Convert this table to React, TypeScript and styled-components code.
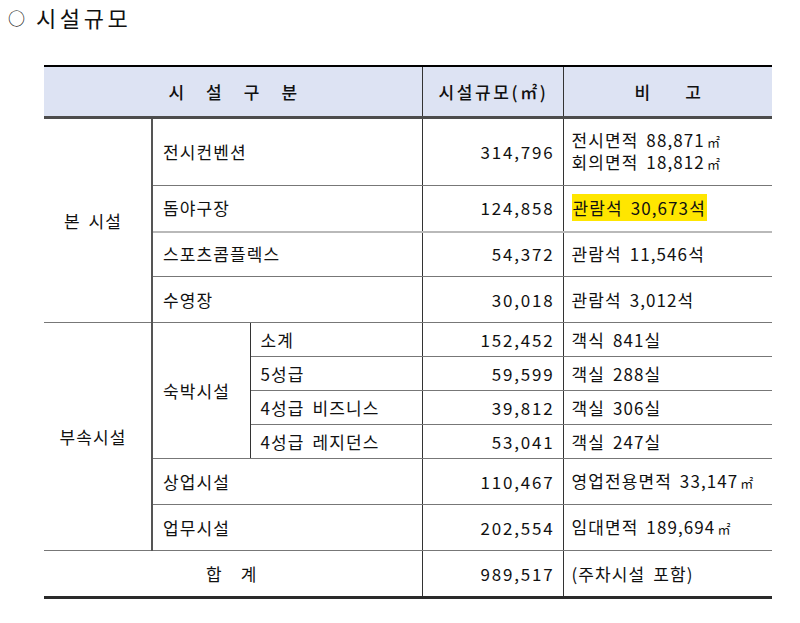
import React from "react";
import styled, { createGlobalStyle } from "styled-components";

const Global = createGlobalStyle`
  html, body { margin: 0; padding: 0; background: #fff; }
  body { font-family: "Noto Sans CJK KR", "Noto Sans", sans-serif; color: #111; }
`;

const Page = styled.div`
  width: 800px;
  height: 623px;
  box-sizing: border-box;
  padding: 2px 0 0 0;
`;

const Title = styled.h1`
  margin: 0;
  padding-left: 8px;
  display: flex;
  align-items: center;
  gap: 11px;
  height: 30px;
  font-size: 22px;
  font-weight: 400;
  letter-spacing: 3.6px;
`;

const Bullet = styled.span`
  font-size: 17px;
  line-height: 1;
  letter-spacing: 0;
`;

const Table = styled.table`
  margin: 33px 0 0 44px;
  width: 728px;
  border-collapse: collapse;
  table-layout: fixed;
  font-size: 17px;
  border-top: 2px solid #000;
  border-bottom: 3px solid #2a2a2a;
`;

const Th = styled.th<{ $spacing?: number }>`
  background: #dde3f3;
  height: 49px;
  padding: 0;
  font-weight: 500;
  text-align: center;
  border-bottom: 3px solid #4c4c4c;
  border-left: 1px solid #333;
  &:first-child { border-left: none; }
  letter-spacing: ${(p) => (p.$spacing ? `${p.$spacing}px` : "2.6px")};
  text-indent: ${(p) => (p.$spacing ? `${p.$spacing}px` : "2px")};
`;

const Row = styled.tr<{ $h: number }>`
  height: ${(p) => p.$h}px;
`;

type Kind = "group" | "label" | "num" | "note" | "total";

const Cell = styled.td<{ $kind: Kind; $topLight?: boolean }>`
  padding: 0 9px 0 ${(p) =>
    p.$kind === "group" || p.$kind === "total" ? "0" : "10px"};
  border-top: ${(p) => (p.$topLight ? "2px solid #b9b9b9" : "1px solid #777")};
  border-bottom: 1px solid #777;
  border-left: 1px solid #333;
  border-right: 1px solid #333;
  text-align: ${(p) =>
    p.$kind === "num" ? "right" : p.$kind === "group" || p.$kind === "total" ? "center" : "left"};
  vertical-align: middle;
  line-height: 20px;
  white-space: nowrap;
  letter-spacing: ${(p) => (p.$kind === "num" ? "1.8px" : "1.1px")};
  word-spacing: 3px;
  ${(p) =>
    p.$kind === "group" || p.$kind === "total"
      ? "border-left: none;"
      : ""}
  ${(p) => (p.$kind === "group" ? "border-right: 2px solid #555;" : "")}
  ${(p) => (p.$kind === "note" ? "border-right: none; padding-left: 8px;" : "")}
  ${(p) => (p.$kind === "num" ? "padding-right: 8px;" : "")}
  ${(p) => (p.$kind === "total" ? "letter-spacing: 19px; text-indent: 25px;" : "")}
`;

const Mark = styled.span`
  background: #ffe600;
  padding: 1px 1px;
`;

const Sq = styled.span`
  font-size: 13px;
  letter-spacing: 0;
  margin-left: 2px;
`;

const m2 = <Sq>㎡</Sq>;

export default function App() {
  return (
    <Page>
      <Global />
      <Title>
        <Bullet>○</Bullet>
        <span>시설규모</span>
      </Title>
      <Table>
        <colgroup>
          <col style={{ width: 108 }} />
          <col style={{ width: 98 }} />
          <col style={{ width: 172 }} />
          <col style={{ width: 141 }} />
          <col style={{ width: 209 }} />
        </colgroup>
        <thead>
          <tr>
            <Th colSpan={3} $spacing={22}>시설구분</Th>
            <Th>시설규모(㎡)</Th>
            <Th $spacing={35}>비고</Th>
          </tr>
        </thead>
        <tbody>
          <Row $h={68}>
            <Cell $kind="group" rowSpan={4}>본 시설</Cell>
            <Cell $kind="label" colSpan={2}>전시컨벤션</Cell>
            <Cell $kind="num">314,796</Cell>
            <Cell $kind="note">
              전시면적 88,871{m2}
              <br />
              회의면적 18,812{m2}
            </Cell>
          </Row>
          <Row $h={46}>
            <Cell $kind="label" colSpan={2}>돔야구장</Cell>
            <Cell $kind="num">124,858</Cell>
            <Cell $kind="note">
              <Mark>관람석 30,673석</Mark>
            </Cell>
          </Row>
          <Row $h={45}>
            <Cell $kind="label" colSpan={2} $topLight>스포츠콤플렉스</Cell>
            <Cell $kind="num" $topLight>54,372</Cell>
            <Cell $kind="note" $topLight>관람석 11,546석</Cell>
          </Row>
          <Row $h={46}>
            <Cell $kind="label" colSpan={2}>수영장</Cell>
            <Cell $kind="num">30,018</Cell>
            <Cell $kind="note">관람석 3,012석</Cell>
          </Row>
          <Row $h={34}>
            <Cell $kind="group" rowSpan={6}>부속시설</Cell>
            <Cell $kind="label" rowSpan={4}>숙박시설</Cell>
            <Cell $kind="label">소계</Cell>
            <Cell $kind="num">152,452</Cell>
            <Cell $kind="note">객식 841실</Cell>
          </Row>
          <Row $h={34}>
            <Cell $kind="label">5성급</Cell>
            <Cell $kind="num">59,599</Cell>
            <Cell $kind="note">객실 288실</Cell>
          </Row>
          <Row $h={34}>
            <Cell $kind="label">4성급 비즈니스</Cell>
            <Cell $kind="num">39,812</Cell>
            <Cell $kind="note">객실 306실</Cell>
          </Row>
          <Row $h={34}>
            <Cell $kind="label">4성급 레지던스</Cell>
            <Cell $kind="num">53,041</Cell>
            <Cell $kind="note">객실 247실</Cell>
          </Row>
          <Row $h={46}>
            <Cell $kind="label" colSpan={2}>상업시설</Cell>
            <Cell $kind="num">110,467</Cell>
            <Cell $kind="note">영업전용면적 33,147{m2}</Cell>
          </Row>
          <Row $h={46}>
            <Cell $kind="label" colSpan={2}>업무시설</Cell>
            <Cell $kind="num">202,554</Cell>
            <Cell $kind="note">임대면적 189,694{m2}</Cell>
          </Row>
          <Row $h={47}>
            <Cell $kind="total" colSpan={3}>합계</Cell>
            <Cell $kind="num">989,517</Cell>
            <Cell $kind="note">(주차시설 포함)</Cell>
          </Row>
        </tbody>
      </Table>
    </Page>
  );
}
